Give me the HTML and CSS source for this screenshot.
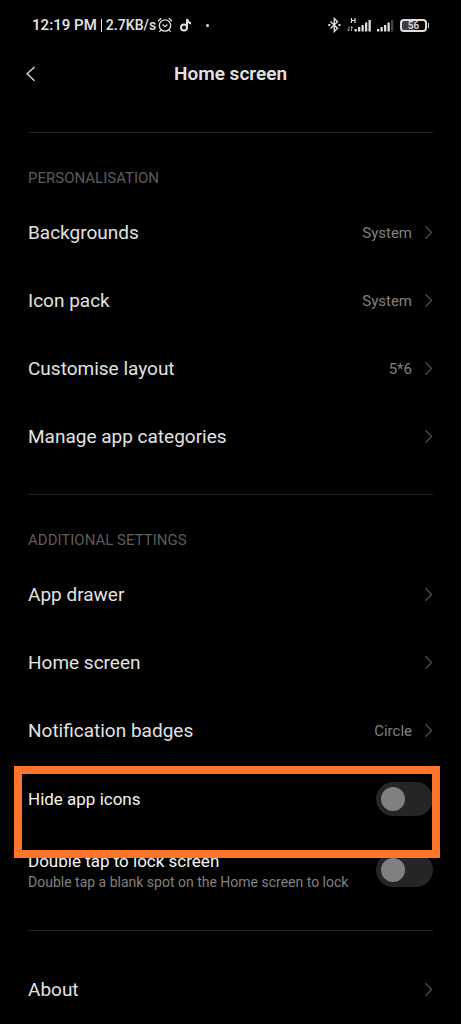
FILE: index.html
```
<!DOCTYPE html>
<html lang="en">
<head>
<meta charset="utf-8">
<meta name="viewport" content="width=device-width, initial-scale=1">
<title>Home screen</title>
<link rel="stylesheet" href="styles.css">
</head>
<body>
<svg class="sprite" aria-hidden="true">
  <symbol id="chevron" viewBox="0 0 9 16"><path d="M1.500 1.200 7.500 7.500l-6 6.300" fill="none" stroke="currentColor" stroke-width="1.300"/></symbol>
</svg>
<div class="status">
  <div class="status-left">
    <span class="clock">12:19 PM</span>
    <span class="bar"></span>
    <span class="rate">2.7KB/s</span>
    <svg class="alarm" width="16" height="16" viewBox="0 0 16 16" fill="none" stroke="currentColor" stroke-width="1.300" aria-hidden="true">
      <circle cx="8" cy="8.500" r="5.700"/><path d="M1 4.200 4.200 1.300M15 4.200 11.800 1.300M3.800 13 2.400 15M12.200 13l1.400 2M5.600 7.500 8 9.700l2.400-2.200"/>
    </svg>
    <svg class="note" width="13" height="14" viewBox="0 0 13 14" fill="none" stroke="currentColor" stroke-width="2" aria-hidden="true">
      <circle cx="4" cy="9.500" r="3"/><path d="M7 9.500V1C7.500 3.200 9 5 11 5.500"/>
    </svg>
    <span class="dot"></span>
  </div>
  <div class="status-right">
    <svg width="13" height="16" viewBox="0 0 13 16" fill="none" stroke="currentColor" stroke-width="1.400" aria-hidden="true">
      <path d="M2.500 4.500 9.500 11.300 6.300 14.500V1.500l3.200 3.200-7 6.800"/><path d="M.3 8h2M10.500 8h2" stroke-width="1.800"/>
    </svg>
    <svg class="signal-one" width="26" height="16" viewBox="0 0 26 16" aria-hidden="true">
      <path d="M4.500 1v5M8 1v5M4.500 3.500H8" fill="none" stroke="currentColor" stroke-width="1.200"/>
      <path d="M2 9.500v4.500M.5 12.500 2 14M4.500 14V9.500M4.500 9.500 6 11" fill="none" stroke="currentColor" opacity=".7"/>
      <path d="M7.500 12h2.300v2.500H7.500zM11 10h2.300v4.500H11zM14.500 8h2.300v6.500h-2.300zM18 5.500h2.300v9H18zM21.500 3h2.300v11.500h-2.300z" fill="currentColor"/>
    </svg>
    <svg class="signal-two" width="17" height="16" viewBox="0 0 17 16" fill="currentColor" aria-hidden="true">
      <path d="M0 12h2.300v2.500H0zM3.500 10h2.300v4.500H3.500zM7 8h2.300v6.500H7zM10.500 5.500h2.300v9h-2.300z"/><path d="M14 3h2.300v11.500H14z" opacity=".3"/>
    </svg>
    <span class="battery">56</span>
  </div>
</div>
<header class="header">
  <button class="back" type="button" aria-label="Back">
    <svg width="11" height="17" viewBox="0 0 11 17" fill="none" stroke="currentColor" stroke-width="1.500"><path d="M8.500 1 1.200 7.800l7.300 7"/></svg>
  </button>
  <h1 class="title">Home screen</h1>
</header>
<main class="settings">
  <section class="section">
    <h2 class="section-label">PERSONALISATION</h2>
    <a class="row" href="#"><span class="name">Backgrounds</span><span class="value">System</span><svg class="chevron"><use href="#chevron"/></svg></a>
    <a class="row" href="#"><span class="name">Icon pack</span><span class="value">System</span><svg class="chevron"><use href="#chevron"/></svg></a>
    <a class="row" href="#"><span class="name">Customise layout</span><span class="value">5*6</span><svg class="chevron"><use href="#chevron"/></svg></a>
    <a class="row" href="#"><span class="name">Manage app categories</span><svg class="chevron"><use href="#chevron"/></svg></a>
  </section>
  <section class="section">
    <h2 class="section-label">ADDITIONAL SETTINGS</h2>
    <a class="row" href="#"><span class="name">App drawer</span><svg class="chevron"><use href="#chevron"/></svg></a>
    <a class="row" href="#"><span class="name">Home screen</span><svg class="chevron"><use href="#chevron"/></svg></a>
    <a class="row" href="#"><span class="name">Notification badges</span><span class="value">Circle</span><svg class="chevron"><use href="#chevron"/></svg></a>
    <label class="row row-switch highlighted"><span class="name">Hide app icons</span><input class="toggle" type="checkbox" role="switch"></label>
    <label class="row row-switch row-tall"><span class="name">Double tap to lock screen<small class="hint">Double tap a blank spot on the Home screen to lock</small></span><input class="toggle" type="checkbox" role="switch"></label>
  </section>
  <section class="section section-last">
    <a class="row" href="#"><span class="name">About</span><svg class="chevron"><use href="#chevron"/></svg></a>
  </section>
</main>
</body>
</html>
```
FILE: styles.css
```
* { box-sizing: border-box; }
body {
  margin: 0;
  background: #000;
  color: #e2e2e2;
  font-family: Roboto, "Liberation Sans", sans-serif;
}
.sprite { display: none; }
.status {
  display: flex;
  justify-content: space-between;
  align-items: center;
  height: 50px;
  padding: 0 34px 0 32px;
  color: #dedede;
  font-size: 14px;
  font-weight: 600;
}
.status-left, .status-right { display: flex; align-items: center; }
.clock { font-size: 15px; }
.bar { width: 1px; height: 13px; margin: 0 4px; background: currentColor; }
.alarm { margin-left: 1px; }
.note { margin-left: 7px; }
.dot { width: 3px; height: 3px; margin-left: 13px; border-radius: 50%; background: currentColor; }
.signal-one { margin-left: 6px; }
.signal-two { margin-left: 4px; }
.battery {
  position: relative;
  width: 27px;
  height: 13px;
  margin-left: 6px;
  border: 2px solid currentColor;
  border-radius: 4px;
  background: linear-gradient(90deg, #3c3c3c 56%, transparent 56%);
  font-size: 10px;
  line-height: 10px;
  text-align: center;
}
.battery::after {
  content: "";
  position: absolute;
  top: 2px;
  right: -4px;
  width: 1px;
  height: 5px;
  background: currentColor;
}
.header {
  display: grid;
  grid-template-columns: 40px 1fr 40px;
  align-items: center;
  height: 48px;
  padding: 0 18px;
}
.back {
  display: flex;
  padding: 8px;
  border: 0;
  background: none;
  color: #d0d0d0;
}
.title { margin: 0; font-size: 19px; font-weight: 600; line-height: 24px; text-align: center; }
.settings { padding: 34px 28px 0; }
.section { padding: 35px 0 23px; border-top: 1px solid #202020; }
.section-last { padding: 25px 0 0; }
.section-label {
  margin: 0 0 11px;
  color: #5c5c5c;
  font-size: 15px;
  font-weight: 400;
  line-height: 20px;
}
.row {
  position: relative;
  display: flex;
  align-items: center;
  min-height: 68px;
  color: inherit;
  text-decoration: none;
}
.row-tall { min-height: 74px; }
.name { flex: 1; font-size: 19px; line-height: 24px; }
.hint { display: block; color: #808080; font-size: 14px; line-height: 18px; }
.value { color: #808080; font-size: 15px; line-height: 20px; }
.chevron { width: 9px; height: 16px; margin-left: 12px; color: #4c4c4c; }
.toggle {
  appearance: none;
  display: flex;
  align-items: center;
  width: 57px;
  height: 34px;
  margin: 0;
  padding: 0 5px;
  border-radius: 17px;
  background: #252525;
}
.toggle::before {
  content: "";
  width: 24px;
  height: 24px;
  border-radius: 50%;
  background: #808080;
}
.toggle:checked { justify-content: flex-end; background: #0d84ff; }
.row-switch { color: #f4f4f4; }
.row-switch .name { font-size: 17px; }
.highlighted { z-index: 1; }
.highlighted::after {
  content: "";
  position: absolute;
  inset: 1px -7px -25px -14px;
  border: 8px solid #ff762b;
  pointer-events: none;
}
```
